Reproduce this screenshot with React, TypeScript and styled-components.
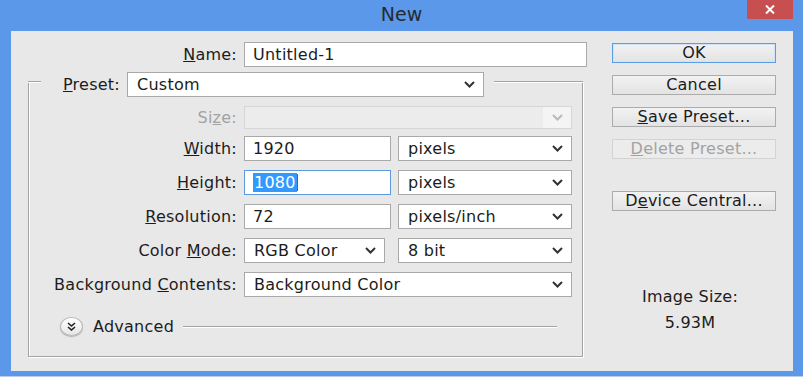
import React from "react";
import styled, { createGlobalStyle } from "styled-components";

const GlobalStyle = createGlobalStyle`
  html, body {
    margin: 0;
    padding: 0;
    background: #5b98ea;
  }
  body {
    font-family: "DejaVu Sans", Verdana, sans-serif;
    font-size: 16px;
    letter-spacing: 0.25px;
    color: #1c1c1c;
  }
`;

const Window = styled.div`
  width: 803px;
  height: 377px;
  box-sizing: border-box;
  background: #5b98ea;
  border-bottom: 1px solid #b9cde8;
  display: flex;
  flex-direction: column;
`;

const TitleBar = styled.div`
  height: 31px;
  padding: 0 10px;
  display: grid;
  grid-template-columns: 1fr auto 1fr;
  align-items: center;
`;

const Title = styled.div`
  grid-column: 2;
  font-size: 19px;
  letter-spacing: 0;
  color: #242a33;
  margin-top: -4px;
`;

const CloseButton = styled.div`
  grid-column: 3;
  justify-self: end;
  align-self: start;
  width: 46px;
  height: 19px;
  background: #c74f4f;
  display: flex;
  align-items: center;
  justify-content: center;
`;

const Panel = styled.div`
  margin: 0 10px 0 11px;
  height: 340px;
  box-sizing: border-box;
  background: #e8e8e8;
  display: flex;
  gap: 25px;
  padding: 11px 17px 0 17px;
`;

const LeftColumn = styled.div`
  width: 559px;
  display: flex;
  flex-direction: column;
`;

const Row = styled.div`
  display: flex;
  align-items: center;
  gap: 7px;
`;

const SizeRow = styled(Row)`
  margin-bottom: -2px;
`;

const Pair = styled.div`
  display: flex;
  gap: 13px;
`;

const Label = styled.label<{ $width?: number; $disabled?: boolean }>`
  width: ${(p) => (p.$width ? `${p.$width}px` : "auto")};
  text-align: right;
  white-space: nowrap;
  color: ${(p) => (p.$disabled ? "#a2a2a2" : "#1c1c1c")};
`;

const TextBox = styled.div<{ $width: number; $focused?: boolean }>`
  width: ${(p) => p.$width}px;
  height: 25px;
  box-sizing: border-box;
  background: #fff;
  border: 1px solid ${(p) => (p.$focused ? "#5c9ae0" : "#a9a9a9")};
  padding-left: 8px;
  display: flex;
  align-items: center;
  white-space: nowrap;
`;

const Selected = styled.span`
  background: #3399ff;
  color: #fff;
  padding: 0 1px;
`;

const Caret = styled.span`
  width: 1px;
  height: 17px;
  background: #b2451c;
`;

const SelectBox = styled.div<{ $width: number; $disabled?: boolean }>`
  width: ${(p) => p.$width}px;
  height: ${(p) => (p.$disabled ? 23 : 25)}px;
  box-sizing: border-box;
  background: ${(p) => (p.$disabled ? "#ececec" : "#fff")};
  border: 1px solid ${(p) => (p.$disabled ? "#d6d6d6" : "#a9a9a9")};
  display: flex;
  align-items: stretch;
  white-space: nowrap;
`;

const SelectValue = styled.div`
  flex: 1;
  padding-left: 9px;
  display: flex;
  align-items: center;
`;

const SelectArrow = styled.div<{ $disabled?: boolean }>`
  width: 28px;
  display: flex;
  align-items: center;
  justify-content: center;
  background: ${(p) => (p.$disabled ? "#f4f4f4" : "transparent")};
`;

const GroupBox = styled.div`
  margin-top: 14px;
  width: 555px;
  height: 276px;
  box-sizing: border-box;
  border: 1px solid #a3a3a3;
  border-top: none;
  box-shadow: inset 1px 0 0 #fff, 1px 1px 0 #fff;
  display: flex;
  flex-direction: column;
`;

const GroupHeader = styled.div`
  margin: -9px -1px 0 -1px;
  display: flex;
  align-items: flex-start;
`;

const EtchedLine = styled.div<{ $width?: number }>`
  ${(p) => (p.$width ? `width: ${p.$width}px;` : "flex: 1;")}
  height: 0;
  border-top: 1px solid #a3a3a3;
  border-bottom: 1px solid #fff;
`;

const HeaderLine = styled(EtchedLine)`
  margin-top: 9px;
`;

const Legend = styled(Row)`
  padding: 0 10px 0 21px;
`;

const Rows = styled.div`
  margin-top: 9px;
  display: flex;
  flex-direction: column;
  gap: 9px;
`;

const AdvancedRow = styled.div`
  margin-top: 20px;
  padding-left: 31px;
  display: flex;
  align-items: center;
  height: 19px;
`;

const RoundButton = styled.div`
  width: 23px;
  height: 19px;
  box-sizing: border-box;
  border-radius: 50%;
  border: 1px solid #b8b8b8;
  background: linear-gradient(#ffffff, #e6e6e6);
  box-shadow: 0 1px 1px rgba(0, 0, 0, 0.25);
  display: flex;
  align-items: center;
  justify-content: center;
`;

const AdvancedLabel = styled.span`
  margin-left: 10px;
`;

const AdvancedLine = styled(EtchedLine)`
  margin: 0 25px 0 9px;
`;

const RightColumn = styled.div`
  width: 164px;
  padding-top: 1px;
  display: flex;
  flex-direction: column;
  gap: 12px;
`;

const Button = styled.div<{ $default?: boolean; $disabled?: boolean; $spaced?: boolean }>`
  height: 20px;
  box-sizing: border-box;
  border: 1px solid
    ${(p) => (p.$default ? "#5a9ee6" : p.$disabled ? "#d3d3d3" : "#acacac")};
  background: ${(p) =>
    p.$disabled ? "#ececec" : "linear-gradient(#f2f2f2, #e3e3e3)"};
  box-shadow: ${(p) => (p.$default ? "inset 0 0 0 1px #cfe3f8" : "none")};
  color: ${(p) => (p.$disabled ? "#a3a3a3" : "#1c1c1c")};
  margin-top: ${(p) => (p.$spaced ? "20px" : "0")};
  display: flex;
  align-items: center;
  justify-content: center;
  line-height: 18px;
`;

const SizeInfo = styled.div`
  margin-top: 64px;
  padding-right: 8px;
  text-align: center;
  display: flex;
  flex-direction: column;
  gap: 7px;
  line-height: 19px;
`;

const Chevron = ({ disabled }: { disabled?: boolean }) => (
  <svg width="11" height="7" viewBox="0 0 11 7">
    <polyline
      points="1,1 5.5,5.5 10,1"
      fill="none"
      stroke={disabled ? "#b9b9b9" : "#333"}
      strokeWidth="2"
    />
  </svg>
);

const Select = ({
  width,
  value,
  disabled,
}: {
  width: number;
  value?: string;
  disabled?: boolean;
}) => (
  <SelectBox $width={width} $disabled={disabled}>
    <SelectValue>{value}</SelectValue>
    <SelectArrow $disabled={disabled}>
      <Chevron disabled={disabled} />
    </SelectArrow>
  </SelectBox>
);

const LABEL_W = 208;

export default function App() {
  return (
    <>
      <GlobalStyle />
      <Window>
        <TitleBar>
          <Title>New</Title>
          <CloseButton>
            <svg width="10" height="9" viewBox="0 0 10 9">
              <path d="M1 0.5 L9 8.5 M9 0.5 L1 8.5" stroke="#fff" strokeWidth="2" />
            </svg>
          </CloseButton>
        </TitleBar>
        <Panel>
          <LeftColumn>
            <Row>
              <Label $width={LABEL_W + 1}>
                <u>N</u>ame:
              </Label>
              <TextBox $width={343}>Untitled-1</TextBox>
            </Row>
            <GroupBox>
              <GroupHeader>
                <HeaderLine $width={13} />
                <Legend>
                  <Label $width={58}>
                    <u>P</u>reset:
                  </Label>
                  <Select width={357} value="Custom" />
                </Legend>
                <HeaderLine />
              </GroupHeader>
              <Rows>
                <SizeRow>
                  <Label $width={LABEL_W} $disabled>
                    Si<u>z</u>e:
                  </Label>
                  <Select width={328} disabled />
                </SizeRow>
                <Row>
                  <Label $width={LABEL_W}>
                    <u>W</u>idth:
                  </Label>
                  <TextBox $width={147}>1920</TextBox>
                  <Select width={174} value="pixels" />
                </Row>
                <Row>
                  <Label $width={LABEL_W}>
                    <u>H</u>eight:
                  </Label>
                  <TextBox $width={147} $focused>
                    <Selected>1080</Selected>
                    <Caret />
                  </TextBox>
                  <Select width={174} value="pixels" />
                </Row>
                <Row>
                  <Label $width={LABEL_W}>
                    <u>R</u>esolution:
                  </Label>
                  <TextBox $width={147}>72</TextBox>
                  <Select width={174} value="pixels/inch" />
                </Row>
                <Row>
                  <Label $width={LABEL_W}>
                    Color <u>M</u>ode:
                  </Label>
                  <Pair>
                    <Select width={141} value="RGB Color" />
                    <Select width={174} value="8 bit" />
                  </Pair>
                </Row>
                <Row>
                  <Label $width={LABEL_W}>
                    Background <u>C</u>ontents:
                  </Label>
                  <Select width={328} value="Background Color" />
                </Row>
              </Rows>
              <AdvancedRow>
                <RoundButton>
                  <svg width="9" height="9" viewBox="0 0 9 9">
                    <polyline points="1,1 4.5,4 8,1" fill="none" stroke="#222" strokeWidth="1.6" />
                    <polyline points="1,5 4.5,8 8,5" fill="none" stroke="#222" strokeWidth="1.6" />
                  </svg>
                </RoundButton>
                <AdvancedLabel>Advanced</AdvancedLabel>
                <AdvancedLine />
              </AdvancedRow>
            </GroupBox>
          </LeftColumn>
          <RightColumn>
            <Button $default>OK</Button>
            <Button>Cancel</Button>
            <Button>
              <u>S</u>ave Preset...
            </Button>
            <Button $disabled>
              <u>D</u>elete Preset...
            </Button>
            <Button $spaced>
              D<u>e</u>vice Central...
            </Button>
            <SizeInfo>
              <span>Image Size:</span>
              <span>5.93M</span>
            </SizeInfo>
          </RightColumn>
        </Panel>
      </Window>
    </>
  );
}
